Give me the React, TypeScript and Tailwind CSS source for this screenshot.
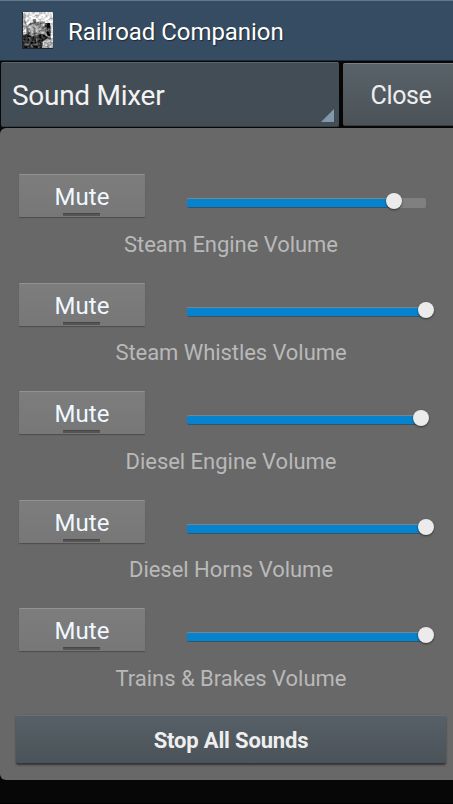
import { clsx } from "clsx";

type Channel = {
  label: string;
  // volume in percent
  volume: number;
  spacing: string;
};

const CHANNELS: Channel[] = [
  { label: "Steam Engine Volume", volume: 86.8, spacing: "tracking-[-0.04px]" },
  { label: "Steam Whistles Volume", volume: 100, spacing: "tracking-[-0.07px]" },
  { label: "Diesel Engine Volume", volume: 98, spacing: "tracking-[-0.02px]" },
  { label: "Diesel Horns Volume", volume: 100, spacing: "tracking-[-0.02px]" },
  { label: "Trains & Brakes Volume", volume: 100, spacing: "tracking-[-0.02px]" },
];

const AppIcon = () => (
  <svg className="h-[37px] w-[31px] shrink-0" viewBox="0 0 31 37">
    <defs>
      <filter id="grain" x="0" y="0" width="100%" height="100%" colorInterpolationFilters="sRGB">
        <feTurbulence type="fractalNoise" baseFrequency="0.35" numOctaves={2} seed={8} result="noise" />
        <feColorMatrix
          in="noise"
          type="matrix"
          values="1 0 0 0 0  1 0 0 0 0  1 0 0 0 0  0 0 0 0 1"
          result="grey"
        />
        <feComposite in="SourceGraphic" in2="grey" operator="arithmetic" k1={0} k2={1} k3={0.9} k4={-0.45} />
      </filter>
    </defs>
    <g filter="url(#grain)">
      <rect width="31" height="37" fill="#e6e6e6" />
      <path d="M0 0h5l-2 9 2 5-3 5H0z" fill="#aaa" />
      <path d="M4 15l4-4 3-1V7h3v3l6-1 3 2h5l1 3v17l-5-2H5z" fill="#777" />
      <circle cx="11" cy="17" r="5.5" fill="#a5a5a5" stroke="#777" />
      <path d="M15 13l7-1 1 8-6 3z" fill="#999" />
      <path d="M23 11h5v13h-3V15h-2z" fill="#222" />
      <path d="M0 23l5-1 5 2 10-2 6 3 2 8-5 4H0z" fill="#2c2c2c" />
      <path d="M4 29l17 1M3 33l16-1M7 25l3 10M14 25l2 9" stroke="#555" />
      <path d="M21 30l4-4 6 2v9H20z" fill="#aaa" />
    </g>
    <path d="M.5 0v36.5H31" fill="none" stroke="#20252a" />
  </svg>
);

const MuteButton = () => (
  <button className="flex h-[43px] w-[126px] flex-col items-center rounded-[1px] border-t border-[#929292] bg-linear-to-b from-[#7d7d7d] to-[#777777] shadow-[0_1px_1px_#4d4d4d]">
    <span className="mt-[6px] text-[24px] leading-8 text-[#f0f8ff]">Mute</span>
    <span className="mr-px h-[3px] w-[37px] border-t border-[#464646] bg-[#555555]" />
  </button>
);

const VolumeSlider = ({ volume }: { volume: number }) => (
  <div className="relative h-[10px] w-[239px] rounded-[2px] bg-[#808080]">
    <div
      className="h-full rounded-l-[2px] border-t border-b border-t-[#6f8798] border-b-[#34536a] bg-[#0683cc]"
      style={{ width: `${volume}%` }}
    />
    <div
      className="absolute top-[-5px] size-4 -translate-x-1/2 rounded-full bg-[#ebebeb] shadow-[0_1px_2px_#333333]"
      style={{ left: `${volume}%` }}
    />
  </div>
);

const ChannelRow = ({ label, volume, spacing }: Channel) => (
  <div className="h-[108.5px]">
    <div className="flex pl-[19px]">
      <MuteButton />
      <div className="ml-[42px] pt-6">
        <VolumeSlider volume={volume} />
      </div>
    </div>
    <p className={clsx("mt-[11.5px] pl-[9px] text-center text-[22px] leading-8 text-[#b9b9b9]", spacing)}>{label}</p>
  </div>
);

export default function App() {
  return (
    <div className="flex h-[804px] w-[453px] flex-col overflow-hidden border-b border-black bg-[#070707] font-['Roboto',sans-serif]">
      <header className="flex h-[61px] shrink-0 items-center border-t border-b border-t-[#62798b] border-b-[#1c2b3a] bg-[#354c62] pl-[22px]">
        <AppIcon />
        <h1 className="mt-[2px] ml-[15px] text-[24px] leading-8 tracking-[-0.05px] text-white [text-shadow:1px_1px_1px_#1d2935]">
          Railroad Companion
        </h1>
      </header>

      <div className="flex h-[67px] shrink-0 gap-[4px] pt-px pl-px">
        <div className="relative h-[65px] w-[338px] shrink-0 rounded-[2px] border-t border-b border-t-[#5c656d] border-b-[#343c44] bg-[#434d56] pl-[11px]">
          <span className="text-[28px] leading-[65px] tracking-[-0.28px] text-[#f3f3f3]">Sound Mixer</span>
          <svg className="absolute right-[5px] bottom-1 size-[13px]" viewBox="0 0 13 13">
            <path d="M13 0v13H0z" fill="#8297ab" />
          </svg>
        </div>
        <button className="mt-px h-[63px] w-[116px] shrink-0 rounded-l-[2px] border-t border-b border-t-[#798187] border-b-[#343b41] bg-linear-to-b from-[#5a6269] to-[#4b5359] pt-[3px] text-[25px] tracking-[-0.4px] text-[#eeeeee]">
          Close
        </button>
      </div>

      <main className="h-[652px] shrink-0 rounded-l-md bg-[#686868] pt-[46px]">
        {CHANNELS.map((channel) => (
          <ChannelRow key={channel.label} {...channel} />
        ))}
        <button className="-mt-[1.5px] ml-4 block h-[49px] w-[430px] rounded-[2px] border-t border-b border-t-[#687178] border-b-[#30373d] bg-linear-to-b from-[#576067] to-[#4b5359] pt-px text-[22px] font-bold tracking-[-0.17px] text-[#eeeeee] shadow-[0_1px_2px_#333333]">
          Stop All Sounds
        </button>
      </main>
    </div>
  );
}
